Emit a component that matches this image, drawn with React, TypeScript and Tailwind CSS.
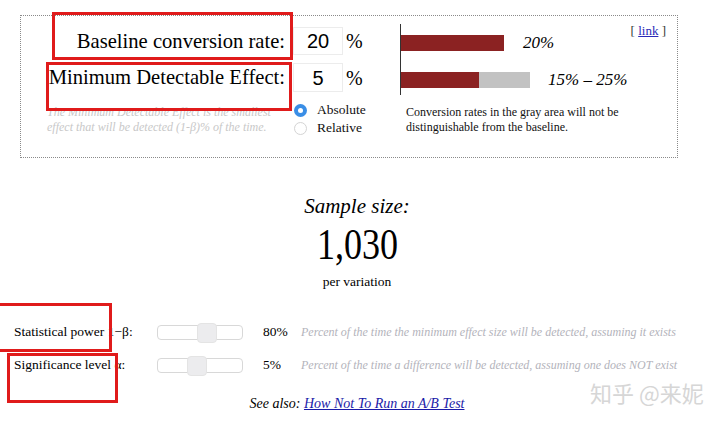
import React from "react";

const serif = "font-['Liberation_Serif','Times_New_Roman',serif]";

function Slider({ left }: { left: number }) {
  return (
    <div className="relative h-[15px] w-[86px] rounded-[4px] border border-[#d8d8d8] bg-white">
      <div
        className="absolute top-[-3px] h-[20px] w-[20px] rounded-[4px] border border-[#e4e4e4] bg-[#ececee]"
        style={{ left }}
      />
    </div>
  );
}

function Radio({ checked, label }: { checked?: boolean; label: string }) {
  return (
    <div className="flex items-center gap-[10px] h-[18px]">
      {checked ? (
        <span className="flex h-[13px] w-[13px] items-center justify-center rounded-full bg-[#3a8ee6]">
          <span className="h-[5px] w-[5px] rounded-full bg-white" />
        </span>
      ) : (
        <span className="h-[13px] w-[13px] rounded-full border border-[#d4d4d4] bg-white" />
      )}
      <span className="text-[13.5px] text-[#111]">{label}</span>
    </div>
  );
}

export default function App() {
  return (
    <div className={`relative h-[423px] w-[720px] overflow-hidden bg-white text-black ${serif}`}>
      {/* calculator box */}
      <div className="ml-[20px] mt-[15px] flex h-[143px] w-[658px] border border-dotted border-[#8a8a8a]">
        <div className="w-[379px] pt-[11px]">
          <div className="flex items-center">
            <div className="w-[264px] text-right text-[20.6px] leading-none">Baseline conversion rate:</div>
            <div className="ml-[8px] flex h-[28px] w-[50px] items-center justify-center border border-[#ececec] font-['Liberation_Sans',Arial,sans-serif] text-[20px]">
              20
            </div>
            <span className="ml-[3px] text-[20px] leading-none">%</span>
          </div>
          <div className="mt-[8px] flex items-center">
            <div className="w-[264px] text-right text-[20.6px] leading-none">Minimum Detectable Effect:</div>
            <div className="ml-[8px] flex h-[29px] w-[50px] items-center justify-center border border-[#ececec] font-['Liberation_Sans',Arial,sans-serif] text-[20px]">
              5
            </div>
            <span className="ml-[3px] text-[20px] leading-none">%</span>
          </div>
          <div className="mt-[10px] flex">
            <p className="ml-[26px] mt-[3px] w-[240px] text-[12px] italic leading-[15px] text-[#c8c8c8]">
              The Minimum Detectable Effect is the smallest effect that will be detected (1-β)% of the time.
            </p>
            <div className="ml-[7px] -mt-[1px] flex flex-col">
              <Radio checked label="Absolute" />
              <Radio label="Relative" />
            </div>
          </div>
        </div>

        <div className="relative flex-1 pt-[8px]">
          <div className="flex h-[71px] flex-col gap-[20px] border-l border-[#333] pt-[10px]">
            <div className="flex items-center">
              <div className="h-[16px] w-[103px] bg-[#8b2222]" />
              <span className="ml-[19px] text-[17px] italic leading-none">20%</span>
            </div>
            <div className="flex items-center">
              <div className="h-[16px] w-[78px] bg-[#8b2222]" />
              <div className="h-[16px] w-[51px] bg-[#c2c2c2]" />
              <span className="ml-[18px] text-[17px] italic leading-none">15% – 25%</span>
            </div>
          </div>
          <p className="ml-[6px] mt-[10px] w-[240px] text-[12px] leading-[15px] text-[#111]">
            Conversion rates in the gray area will not be distinguishable from the baseline.
          </p>
          <div className="absolute right-[11px] top-[8px] text-[13px] leading-none text-[#333]">
            [ <a href="#" className="text-[#2a2ab8] underline">link</a> ]
          </div>
        </div>
      </div>

      {/* result */}
      <div className="mt-[38px] flex flex-col items-center pr-[6px]">
        <div className="text-[21px] italic leading-none">Sample size:</div>
        <div className="mt-[6px] inline-block scale-x-[0.82] text-[44px] leading-none">1,030</div>
        <div className="mt-[8px] text-[13.5px] leading-none">per variation</div>
      </div>

      {/* options */}
      <div className="mt-[36px] flex flex-col gap-[18px] pl-[14px] text-[13.5px] leading-none">
        <div className="flex items-center">
          <span className="w-[143px]">Statistical power 1−β:</span>
          <Slider left={39} />
          <span className="ml-[20px] w-[38px]">80%</span>
          <span className="italic text-[#b3b3bb] text-[12px]">
            Percent of the time the minimum effect size will be detected, assuming it exists
          </span>
        </div>
        <div className="flex items-center">
          <span className="w-[143px]">Significance level α:</span>
          <Slider left={29} />
          <span className="ml-[20px] w-[38px]">5%</span>
          <span className="italic text-[#b3b3bb] text-[12px]">
            Percent of the time a difference will be detected, assuming one does NOT exist
          </span>
        </div>
      </div>

      <div className="mt-[24px] pr-[6px] text-center text-[14px] italic leading-none">
        See also: <a href="#" className="text-[#1a1aa8] underline">How Not To Run an A/B Test</a>
      </div>

      {/* watermark */}
      <div className="absolute left-[590px] top-[381px] font-['Noto_Sans_CJK_SC',sans-serif] text-[22px] leading-none text-[#d6d6d6]">
        知乎 @来妮
      </div>

      {/* annotation boxes */}
      <div className="absolute left-[52px] top-[12px] h-[48px] w-[241px] border-[3px] border-[#e01b1b]" />
      <div className="absolute left-[46px] top-[62px] h-[49px] w-[246px] border-[3px] border-[#e01b1b]" />
      <div className="absolute left-[-4px] top-[303px] h-[49px] w-[116px] border-[3px] border-[#e01b1b]" />
      <div className="absolute left-[7px] top-[353px] h-[50px] w-[111px] border-[3px] border-[#e01b1b]" />
    </div>
  );
}
